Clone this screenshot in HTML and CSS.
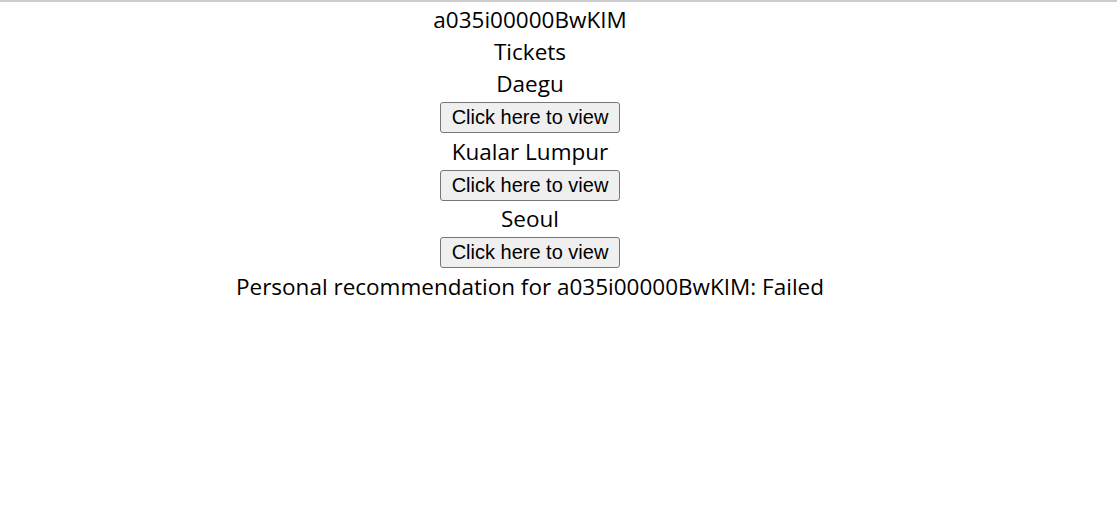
FILE: index.html
```html
<!DOCTYPE html>
<html>
<head>
<meta charset="utf-8">
<link rel="stylesheet" href="styles.css">
</head>
<body>
<div class="page">
  <div class="content">
    <div class="line">a035i00000BwKIM</div>
    <div class="line">Tickets</div>
    <div class="line">Daegu</div>
    <div class="btn-row"><button class="view-btn">Click here to view</button></div>
    <div class="line">Kualar Lumpur</div>
    <div class="btn-row"><button class="view-btn">Click here to view</button></div>
    <div class="line">Seoul</div>
    <div class="btn-row"><button class="view-btn">Click here to view</button></div>
    <div class="line">Personal recommendation for a035i00000BwKIM: Failed</div>
  </div>
</div>
</body>
</html>
```
FILE: styles.css
```css
html, body {
  margin: 0;
  padding: 0;
  background: #ffffff;
}
.page {
  border-top: 2px solid #cccccc;
}
.content {
  width: 1060px;
  text-align: center;
  font-family: "Open Sans", "Noto Sans", sans-serif;
  font-size: 22.5px;
  color: #000000;
  padding-top: 2px;
}
.line {
  height: 32px;
  line-height: 32px;
}
.btn-row {
  height: 35.5px;
  display: flex;
  justify-content: center;
  align-items: center;
}
.view-btn {
  font-family: "Liberation Sans", Arial, sans-serif;
  font-size: 20px;
  height: 31px;
  padding: 0 11px;
  border: 1px solid #767676;
  border-radius: 3px;
  background: #efefef;
  color: #000000;
}
```
